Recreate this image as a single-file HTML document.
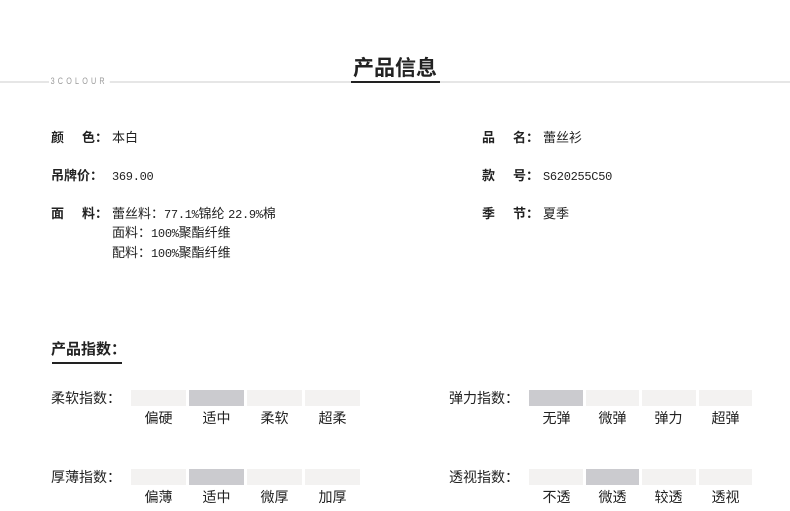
<!DOCTYPE html>
<html><head><meta charset="utf-8"><style>
*{margin:0;padding:0}
body{width:790px;height:511px;background:#fff;position:relative;overflow:hidden;font-family:"Liberation Sans","Noto Sans CJK SC",sans-serif;color:#222;font-size:13px}
.a{position:absolute;white-space:nowrap;line-height:16px}
.b{font-weight:bold}
.k{display:inline-block;width:61px;font-weight:bold}
.g{margin-left:18px}
.c{font-family:"Noto Sans CJK SC",sans-serif}
.m{font-family:"Liberation Mono","Noto Sans CJK SC",monospace;font-size:12px;letter-spacing:-0.3px}
.bar{position:absolute;height:16px;width:55px;background:#f3f2f1}
.on{background:#cbcbcf}
.l{position:absolute;font-size:14px;width:55px;text-align:center;line-height:16px}
</style></head><body>
<div style="position:absolute;left:0;top:81px;width:790px;height:2px;background:#e6e6e6"></div>
<div class="a" style="left:49px;top:75px;font-size:9px;letter-spacing:4px;color:#999;background:#fff;padding:0 2px;line-height:12px;transform:scaleX(0.8);transform-origin:left">3COLOUR</div>
<div class="a b" style="left:353px;top:57px;font-size:21px;line-height:24px;color:#222">产品信息</div>
<div style="position:absolute;left:351px;top:81px;width:89px;height:2px;background:#222"></div>

<div class="a" style="left:51px;top:129px"><span class="k">颜<span class="g">色</span><span class="c">：</span></span>本白</div>
<div class="a" style="left:51px;top:167px"><span class="k">吊牌价<span class="c">：</span></span><span class="m">369.00</span></div>
<div class="a" style="left:51px;top:205px"><span class="k">面<span class="g">料</span><span class="c">：</span></span>蕾丝料<span class="c">：</span><span class="m">77.1%</span>锦纶 <span class="m">22.9%</span>棉</div>
<div class="a" style="left:112px;top:224px">面料<span class="c">：</span><span class="m">100%</span>聚酯纤维</div>
<div class="a" style="left:112px;top:244px">配料<span class="c">：</span><span class="m">100%</span>聚酯纤维</div>

<div class="a" style="left:482px;top:129px"><span class="k">品<span class="g">名</span><span class="c">：</span></span>蕾丝衫</div>
<div class="a" style="left:482px;top:167px"><span class="k">款<span class="g">号</span><span class="c">：</span></span><span class="m">S620255C50</span></div>
<div class="a" style="left:482px;top:205px"><span class="k">季<span class="g">节</span><span class="c">：</span></span>夏季</div>

<div class="a b" style="left:51px;top:341px;font-size:15px">产品指数<span class="c">：</span></div>
<div style="position:absolute;left:52px;top:362px;width:70px;height:2px;background:#222"></div>

<div class="a" style="left:51px;top:390px;font-size:14px">柔软指数<span class="c">：</span></div>
<div class="bar" style="left:131px;top:390px"></div><div class="bar on" style="left:189px;top:390px"></div><div class="bar" style="left:247px;top:390px"></div><div class="bar" style="left:305px;top:390px"></div>
<div class="l" style="left:131px;top:410px">偏硬</div><div class="l" style="left:189px;top:410px">适中</div><div class="l" style="left:247px;top:410px">柔软</div><div class="l" style="left:305px;top:410px">超柔</div>

<div class="a" style="left:51px;top:469px;font-size:14px">厚薄指数<span class="c">：</span></div>
<div class="bar" style="left:131px;top:469px"></div><div class="bar on" style="left:189px;top:469px"></div><div class="bar" style="left:247px;top:469px"></div><div class="bar" style="left:305px;top:469px"></div>
<div class="l" style="left:131px;top:489px">偏薄</div><div class="l" style="left:189px;top:489px">适中</div><div class="l" style="left:247px;top:489px">微厚</div><div class="l" style="left:305px;top:489px">加厚</div>

<div class="a" style="left:449px;top:390px;font-size:14px">弹力指数<span class="c">：</span></div>
<div class="bar on" style="left:529px;top:390px;width:54px"></div><div class="bar" style="left:586px;top:390px;width:53px"></div><div class="bar" style="left:642px;top:390px;width:54px"></div><div class="bar" style="left:699px;top:390px;width:53px"></div>
<div class="l" style="left:529px;top:410px">无弹</div><div class="l" style="left:585px;top:410px">微弹</div><div class="l" style="left:641px;top:410px">弹力</div><div class="l" style="left:698px;top:410px">超弹</div>

<div class="a" style="left:449px;top:469px;font-size:14px">透视指数<span class="c">：</span></div>
<div class="bar" style="left:529px;top:469px;width:54px"></div><div class="bar on" style="left:586px;top:469px;width:53px"></div><div class="bar" style="left:642px;top:469px;width:54px"></div><div class="bar" style="left:699px;top:469px;width:53px"></div>
<div class="l" style="left:529px;top:489px">不透</div><div class="l" style="left:585px;top:489px">微透</div><div class="l" style="left:641px;top:489px">较透</div><div class="l" style="left:698px;top:489px">透视</div>
</body></html>
